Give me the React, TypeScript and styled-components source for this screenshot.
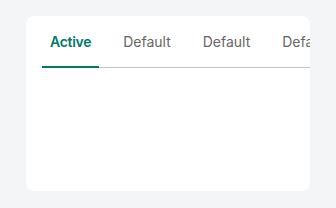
import styled, { createGlobalStyle } from "styled-components";

const tabs = ["Active", "Default", "Default", "Default", "Default"];

const GlobalStyle = createGlobalStyle`
  html, body {
    margin: 0;
    background: #f4f5f7;
    font-family: Inter, "Noto Sans", sans-serif;
  }
`;

const Page = styled.div`
  padding: 16px 26px;
`;

const Card = styled.section`
  background: #ffffff;
  border-radius: 8px;
  height: 175px;
  box-sizing: border-box;
  padding: 16px 0 0 16px;
  overflow: hidden;
`;

const TabList = styled.div`
  display: flex;
  gap: 16px;
  border-bottom: 1px solid #c4c4c4;
  white-space: nowrap;
`;

const Tab = styled.button<{ $active?: boolean }>`
  flex: none;
  background: none;
  border: none;
  border-bottom: 2px solid ${({ $active }) => ($active ? "#00796b" : "transparent")};
  margin-bottom: -1px;
  padding: 0 8px 14px;
  font-family: inherit;
  font-size: 14px;
  line-height: 20px;
  font-weight: ${({ $active }) => ($active ? 600 : 400)};
  letter-spacing: ${({ $active }) => ($active ? "-0.3px" : "0")};
  color: ${({ $active }) => ($active ? "#00796b" : "#666666")};
  cursor: pointer;
`;

const App = () => {
  return (
    <Page>
      <GlobalStyle />
      <Card>
        <TabList>
          {tabs.map((label, i) => (
            <Tab key={i} $active={i === 0}>
              {label}
            </Tab>
          ))}
        </TabList>
      </Card>
    </Page>
  );
};

export default App;
